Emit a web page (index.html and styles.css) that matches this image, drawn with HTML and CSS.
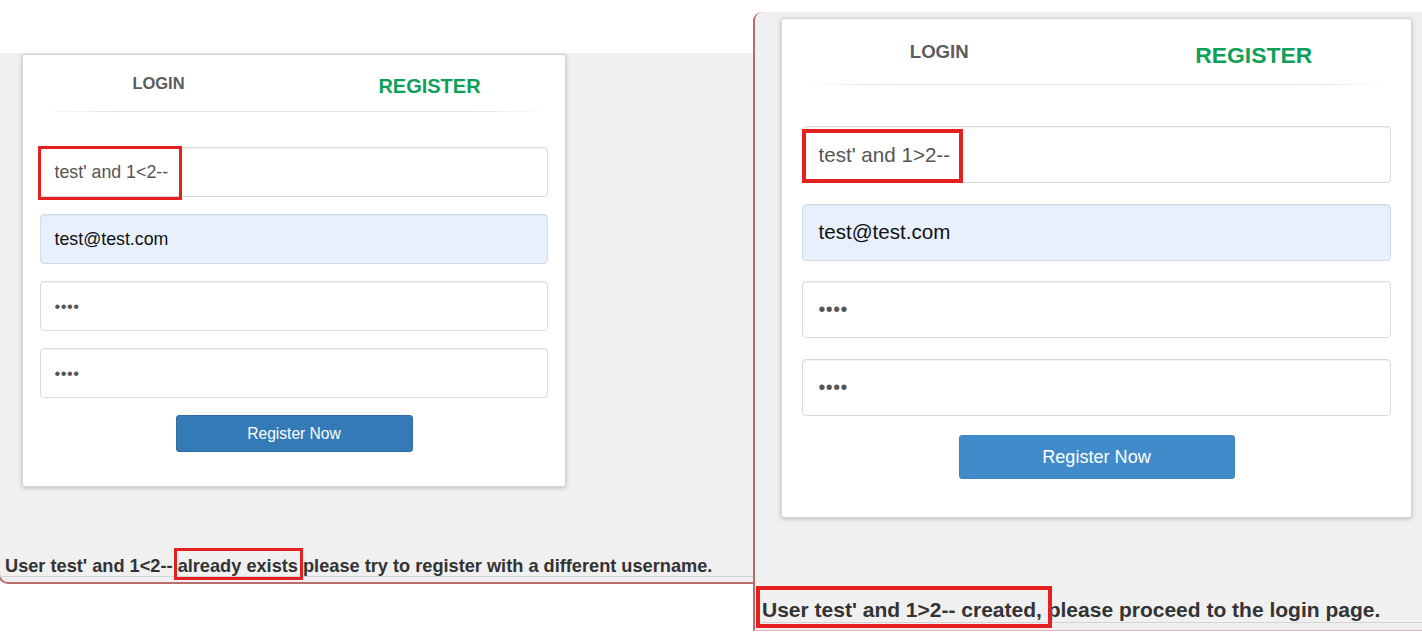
FILE: index.html
```html
<!DOCTYPE html>
<html lang="en">

<head>
  <meta charset="UTF-8" />
  <meta name="viewport" content="width=device-width, initial-scale=1.0" />
  <title>Register - username check</title>
  <link rel="stylesheet" href="styles.css">
</head>

<body>
  <div class="shots">
    <!-- first attempt: user already exists -->
    <section class="panel panel-a">
      <div class="card">
        <div class="tabs">
          <div class="tab">LOGIN</div>
          <div class="tab tab-active">REGISTER</div>
        </div>
        <div class="divider"></div>
        <div class="fields">
          <div class="field">test' and 1&lt;2--<span class="annot"></span></div>
          <div class="field field-fill">test@test.com</div>
          <div class="field field-pass">&bull;&bull;&bull;&bull;</div>
          <div class="field field-pass">&bull;&bull;&bull;&bull;</div>
          <div class="btn">Register Now</div>
        </div>
      </div>
      <p class="msg">User test' and 1&lt;2-- <span class="hl">already exists</span> please try to register with a different username.</p>
    </section>

    <!-- second attempt: user created -->
    <section class="panel panel-b">
      <div class="card">
        <div class="tabs">
          <div class="tab">LOGIN</div>
          <div class="tab tab-active">REGISTER</div>
        </div>
        <div class="divider"></div>
        <div class="fields">
          <div class="field">test' and 1&gt;2--<span class="annot"></span></div>
          <div class="field field-fill">test@test.com</div>
          <div class="field field-pass">&bull;&bull;&bull;&bull;</div>
          <div class="field field-pass">&bull;&bull;&bull;&bull;</div>
          <div class="btn">Register Now</div>
        </div>
      </div>
      <p class="msg"><span class="hl">User test' and 1&gt;2-- created,</span> please proceed to the login page.</p>
    </section>
  </div>
</body>

</html>
```

FILE: styles.css
```css
html,
body {
  margin: 0;
  background: #fff;
  overflow: hidden;
}

body {
  font-family: "Liberation Sans", Arial, sans-serif;
  color: #333;
}

.shots {
  display: flex;
  align-items: flex-start;
  width: 1422px;
}

.panel {
  position: relative;
  box-sizing: border-box;
  display: flex;
  flex-direction: column;
  background: #f0f0f0;
  flex-shrink: 0;
}

.card {
  box-sizing: border-box;
  background: #fff;
  border: 1px solid #d6d6d6;
  border-radius: 3px;
  box-shadow: 0 1px 4px rgba(0, 0, 0, 0.22);
}

.tabs {
  display: flex;
}

.tab {
  flex: 1;
  display: flex;
  align-items: center;
  justify-content: center;
  font-weight: bold;
  color: #5c5c5c;
}

.tab-active {
  color: #0f9f58;
}

.divider {
  height: 1px;
  background: linear-gradient(to right, rgba(0, 0, 0, 0), rgba(0, 0, 0, 0.11) 15%, rgba(0, 0, 0, 0.11) 85%, rgba(0, 0, 0, 0));
}

.field {
  position: relative;
  box-sizing: border-box;
  display: flex;
  align-items: center;
  border: 1px solid #dadada;
  border-radius: 4px;
  box-shadow: inset 0 1px 1px rgba(0, 0, 0, 0.06);
  color: #555;
  background: #fff;
}

.field-fill {
  background: #e8f0fe;
  border-color: #d3dbe6;
  color: #111;
}

.field-pass {
  color: #555;
  letter-spacing: 0.5px;
}

.btn {
  box-sizing: border-box;
  display: flex;
  align-items: center;
  justify-content: center;
  margin: 0 auto;
  color: #fff;
  border-radius: 3px;
}

.annot {
  position: absolute;
  box-sizing: border-box;
  border: 3px solid #e52020;
}

.msg {
  margin: auto 0 0;
  font-weight: bold;
  color: #333;
  border-bottom: 1px solid #d4d4d4;
  white-space: nowrap;
}

.hl {
  position: relative;
}

.hl::after {
  content: "";
  position: absolute;
  border: 3px solid #e52020;
}

/* left shot */
.panel-a {
  width: 755px;
  height: 531px;
  margin: 53px 0 0 -2px;
  border-left: 2px solid #b96c6c;
  border-bottom: 2px solid #b96c6c;
  border-bottom-left-radius: 10px;
}

.panel-a .card {
  width: 544px;
  height: 433px;
  margin: 1px 0 0 22px;
}

.panel-a .tabs {
  height: 56px;
}

.panel-a .tab {
  font-size: 16.5px;
}

.panel-a .tab-active {
  font-size: 20px;
  padding-top: 6px;
}

.panel-a .divider {
  margin: 0 17px;
}

.panel-a .fields {
  padding: 35px 17px 0;
}

.panel-a .field {
  height: 50px;
  margin-bottom: 17px;
  padding-left: 13.5px;
  font-size: 17.8px;
}

.panel-a .field-pass {
  font-size: 16.5px;
}

.panel-a .btn {
  width: 237px;
  height: 37px;
  margin-top: 1px;
  font-size: 15.6px;
  background: #337ab7;
  border: 1px solid #2e6da4;
}

.panel-a .annot {
  left: -3px;
  top: -2px;
  width: 144px;
  height: 54px;
}

.panel-a .msg {
  font-size: 18.2px;
  line-height: 20px;
  padding-left: 5px;
  margin-bottom: 5px;
}

.panel-a .hl::after {
  left: -4px;
  right: -5px;
  top: -8px;
  bottom: -4px;
}

/* right shot */
.panel-b {
  width: 669px;
  height: 619px;
  margin-top: 12px;
  border-left: 2px solid #b96c6c;
  border-bottom: 1px solid #deb4b4;
  border-top-left-radius: 9px;
}

.panel-b .card {
  width: 631px;
  height: 500px;
  margin: 6px 0 0 26px;
}

.panel-b .tabs {
  height: 65px;
}

.panel-b .tab {
  font-size: 18.6px;
}

.panel-b .tab-active {
  font-size: 22.9px;
  padding-top: 7px;
}

.panel-b .divider {
  margin: 0 20px;
}

.panel-b .fields {
  padding: 41px 20px 0;
}

.panel-b .field {
  height: 57px;
  margin-bottom: 20.5px;
  padding-left: 15.5px;
  font-size: 20.6px;
}

.panel-b .field-pass {
  font-size: 19.5px;
}

.panel-b .btn {
  width: 276px;
  height: 44px;
  margin-top: -1px;
  font-size: 18.1px;
  background: #428bca;
  border: 1px solid #3f85c2;
}

.panel-b .annot {
  left: -1px;
  top: 2px;
  width: 161px;
  height: 54px;
  border-width: 4px;
}

.panel-b .msg {
  font-size: 21px;
  line-height: 24px;
  padding-left: 7px;
  margin-bottom: 7px;
}

.panel-b .hl::after {
  left: -6px;
  right: -10px;
  top: -12px;
  bottom: -7px;
  border-width: 4px;
}
```
